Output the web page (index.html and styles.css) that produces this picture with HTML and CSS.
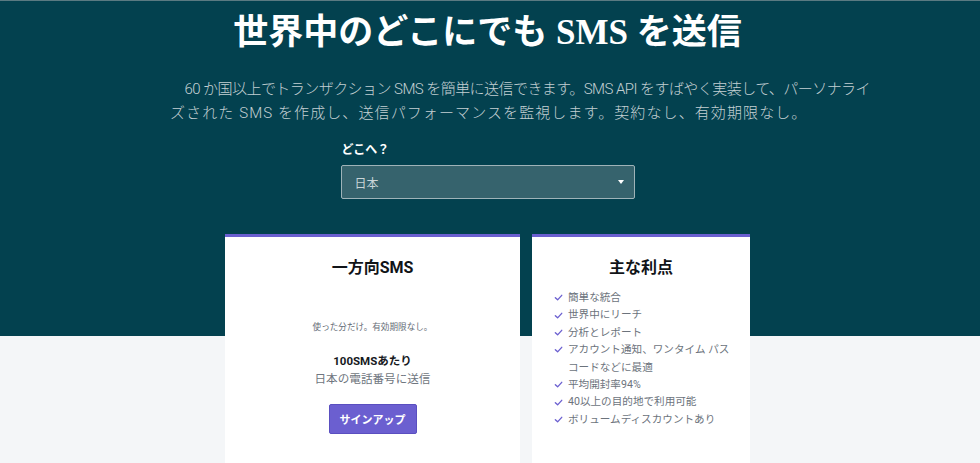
FILE: index.html
```html
<!DOCTYPE html>
<html lang="ja">
<head>
<meta charset="utf-8">
<link rel="stylesheet" href="styles.css">
</head>
<body>
<div class="page">
  <div class="inner">
    <h1 class="title">世界中のどこにでも SMS を送信</h1>
    <p class="lead"><span class="lead-l1">　60 か国以上でトランザクション SMS を簡単に送信できます。SMS API をすばやく実装して、パーソナライ</span><span class="lead-l2">ズされた SMS を作成し、送信パフォーマンスを監視します。契約なし、有効期限なし。</span></p>
    <div class="picker">
      <label class="picker-label">どこへ？</label>
      <div class="select">
        <span class="select-value">日本</span>
        <span class="caret"></span>
      </div>
    </div>
    <div class="cards">
      <section class="card card-price">
        <h2 class="card-title">一方向SMS</h2>
        <p class="note">使った分だけ。有効期限なし。</p>
        <p class="per">100SMSあたり</p>
        <p class="dest">日本の電話番号に送信</p>
        <button class="btn">サインアップ</button>
      </section>
      <section class="card card-benefits">
        <h2 class="card-title">主な利点</h2>
        <ul class="benefits">
          <li><span class="check"><svg viewBox="0 0 10 10" width="9" height="9"><path d="M1.5 5.2 L4 7.6 L8.6 2.6" fill="none" stroke="#6b5fd0" stroke-width="1.5" stroke-linecap="round" stroke-linejoin="round"/></svg></span><span>簡単な統合</span></li>
          <li><span class="check"><svg viewBox="0 0 10 10" width="9" height="9"><path d="M1.5 5.2 L4 7.6 L8.6 2.6" fill="none" stroke="#6b5fd0" stroke-width="1.5" stroke-linecap="round" stroke-linejoin="round"/></svg></span><span>世界中にリーチ</span></li>
          <li><span class="check"><svg viewBox="0 0 10 10" width="9" height="9"><path d="M1.5 5.2 L4 7.6 L8.6 2.6" fill="none" stroke="#6b5fd0" stroke-width="1.5" stroke-linecap="round" stroke-linejoin="round"/></svg></span><span>分析とレポート</span></li>
          <li><span class="check"><svg viewBox="0 0 10 10" width="9" height="9"><path d="M1.5 5.2 L4 7.6 L8.6 2.6" fill="none" stroke="#6b5fd0" stroke-width="1.5" stroke-linecap="round" stroke-linejoin="round"/></svg></span><span>アカウント通知、ワンタイム パス<br>コードなどに最適</span></li>
          <li><span class="check"><svg viewBox="0 0 10 10" width="9" height="9"><path d="M1.5 5.2 L4 7.6 L8.6 2.6" fill="none" stroke="#6b5fd0" stroke-width="1.5" stroke-linecap="round" stroke-linejoin="round"/></svg></span><span>平均開封率94%</span></li>
          <li><span class="check"><svg viewBox="0 0 10 10" width="9" height="9"><path d="M1.5 5.2 L4 7.6 L8.6 2.6" fill="none" stroke="#6b5fd0" stroke-width="1.5" stroke-linecap="round" stroke-linejoin="round"/></svg></span><span>40以上の目的地で利用可能</span></li>
          <li><span class="check"><svg viewBox="0 0 10 10" width="9" height="9"><path d="M1.5 5.2 L4 7.6 L8.6 2.6" fill="none" stroke="#6b5fd0" stroke-width="1.5" stroke-linecap="round" stroke-linejoin="round"/></svg></span><span>ボリュームディスカウントあり</span></li>
        </ul>
      </section>
    </div>
  </div>
</div>
</body>
</html>
```
FILE: styles.css
```css
* { box-sizing: border-box; }
html, body { margin: 0; padding: 0; }
body {
  font-family: Roboto, "Noto Sans CJK JP", sans-serif;
  background: #f4f6f8;
  height: 463px;
  overflow: hidden;
}
.page {
  background: linear-gradient(to bottom, #03414f 0, #03414f 335px, #f4f6f8 335px);
  border-top: 1px solid #5b7a82;
  height: 463px;
}
.inner {
  width: 975px;
  display: flex;
  flex-direction: column;
  align-items: center;
}
.title {
  margin: 11px 0 0;
  font-family: "Liberation Serif", "Noto Sans CJK JP", serif;
  font-weight: 700;
  font-size: 35px;
  line-height: 42px;
  color: #ffffff;
}
.lead {
  margin: 23px 0 0 170px;
  align-self: flex-start;
  font-size: 15px;
  line-height: 24px;
  color: #c3d0d3;
  font-weight: 300;
  white-space: nowrap;
}
.lead-l1 {
  display: block;
  letter-spacing: -0.55px;
}
.lead-l2 {
  display: block;
  letter-spacing: 1.1px;
}
.picker {
  margin-top: 17px;
  width: 294px;
  display: flex;
  flex-direction: column;
}
.picker-label {
  font-size: 12px;
  font-weight: 700;
  color: #ffffff;
  line-height: 16px;
  padding-left: 1px;
}
.select {
  margin-top: 7px;
  height: 34px;
  border: 1px solid #9fb3b8;
  border-radius: 2px;
  background: #36636d;
  display: flex;
  align-items: center;
  justify-content: space-between;
  padding: 0 10px 0 13px;
}
.select-value {
  font-size: 12px;
  color: #c9d5d8;
}
.caret {
  width: 0;
  height: 0;
  border-left: 3.5px solid transparent;
  border-right: 3.5px solid transparent;
  border-top: 4px solid #ffffff;
}
.cards {
  margin-top: 35px;
  display: flex;
  gap: 12px;
  align-items: flex-start;
}
.card {
  background: #ffffff;
  border-top: 3px solid #6b5fd0;
  height: 240px;
  display: flex;
  flex-direction: column;
  align-items: center;
}
.card-price { width: 295px; }
.card-benefits { width: 218px; }
.card-title {
  margin: 20px 0 0;
  font-size: 16px;
  line-height: 22px;
  font-weight: 700;
  color: #111418;
}
.note {
  margin: 42px 0 0;
  font-size: 8.6px;
  line-height: 12px;
  color: #666d77;
}
.per {
  margin: 20px 0 0;
  font-size: 11.5px;
  font-weight: 700;
  line-height: 16px;
  color: #16191d;
}
.dest {
  margin: 2px 0 0;
  font-size: 11.6px;
  line-height: 16px;
  color: #6f7680;
}
.btn {
  margin-top: 17px;
  width: 88px;
  height: 30px;
  border: 1px solid #5a4fc0;
  border-radius: 2px;
  background: #6b5fd0;
  color: #ffffff;
  font-family: Roboto, "Noto Sans CJK JP", sans-serif;
  font-size: 11px;
  font-weight: 700;
  padding: 0;
}
.benefits {
  list-style: none;
  margin: 10px 0 0;
  padding: 0 0 0 22px;
  align-self: stretch;
}
.benefits li {
  display: flex;
  gap: 5px;
  font-size: 10.6px;
  line-height: 17.4px;
  color: #6c737c;
}
.check {
  flex: none;
  width: 9px;
  display: flex;
  align-items: center;
  height: 17.4px;
}
```
